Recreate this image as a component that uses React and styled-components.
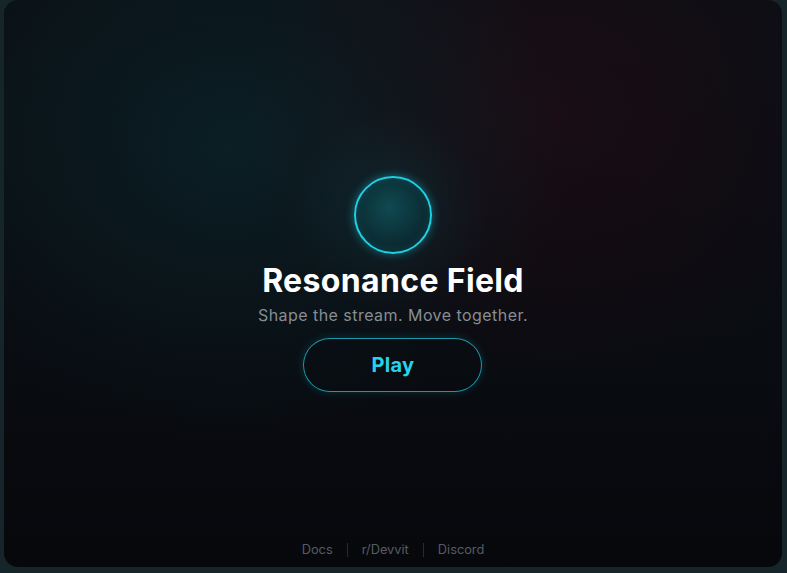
import React from "react";
import styled, { createGlobalStyle } from "styled-components";

const Global = createGlobalStyle`
  html, body { margin: 0; padding: 0; background: #16252a; }
  body { font-family: Inter, "Noto Sans", sans-serif; }
  #root { height: 573px; }
`;

const Frame = styled.div`
  height: 573px;
  box-sizing: border-box;
  padding: 0 5px 6px 4px;
  display: flex;
`;

const Card = styled.main`
  flex: 1;
  border-radius: 14px;
  overflow: hidden;
  display: flex;
  flex-direction: column;
  align-items: center;
  background:
    radial-gradient(circle at 49.5% 37%, rgba(20, 90, 100, 0.2) 0, rgba(20, 90, 100, 0) 100px),
    radial-gradient(ellipse 340px 290px at 29% 26%, rgba(14, 58, 66, 0.38), rgba(14, 58, 66, 0) 100%),
    radial-gradient(ellipse 320px 280px at 71% 20%, rgba(60, 10, 22, 0.32), rgba(60, 10, 22, 0) 100%),
    linear-gradient(180deg, #0a0f14 0%, #090c11 60%, #07080c 100%);
`;

const Hero = styled.section`
  flex: 1;
  display: flex;
  flex-direction: column;
  align-items: center;
  padding-top: 176px;
`;

const Orb = styled.div`
  width: 74px;
  height: 74px;
  border-radius: 50%;
  border: 2px solid #1fd0e2;
  background: radial-gradient(circle at 45% 40%, #0f4a52 0%, #0c2e35 55%, #0b1d23 100%);
  box-shadow: 0 0 10px rgba(34, 211, 238, 0.45), inset 0 0 8px rgba(34, 211, 238, 0.15);
`;

const Title = styled.h1`
  margin: 9px 0 0;
  font-size: 32px;
  line-height: 36px;
  font-weight: 700;
  color: #ffffff;
  letter-spacing: 0.35px;
`;

const Subtitle = styled.p`
  margin: 6px 0 0;
  font-size: 16px;
  line-height: 20px;
  color: #878d93;
  letter-spacing: 0.45px;
`;

const PlayButton = styled.button`
  margin-top: 13px;
  width: 179px;
  height: 54px;
  border-radius: 27px;
  border: 1.5px solid rgba(34, 200, 220, 0.75);
  background: rgba(8, 14, 18, 0.6);
  color: #27d3ea;
  font-family: Inter, "Noto Sans", sans-serif;
  font-size: 20px;
  font-weight: 700;
  letter-spacing: 0.3px;
  box-shadow: 0 0 10px rgba(34, 211, 238, 0.18);
  cursor: pointer;
`;

const Footer = styled.footer`
  display: flex;
  align-items: center;
  gap: 14px;
  padding-bottom: 9px;
`;

const FooterLink = styled.a`
  font-size: 12.8px;
  line-height: 16px;
  color: #565c63;
  text-decoration: none;
`;

const Sep = styled.span`
  width: 1px;
  height: 14px;
  background: #262c33;
`;

export default function App() {
  return (
    <>
      <Global />
      <Frame>
        <Card>
          <Hero>
            <Orb />
            <Title>Resonance Field</Title>
            <Subtitle>Shape the stream. Move together.</Subtitle>
            <PlayButton>Play</PlayButton>
          </Hero>
          <Footer>
            <FooterLink href="#">Docs</FooterLink>
            <Sep />
            <FooterLink href="#">r/Devvit</FooterLink>
            <Sep />
            <FooterLink href="#">Discord</FooterLink>
          </Footer>
        </Card>
      </Frame>
    </>
  );
}
